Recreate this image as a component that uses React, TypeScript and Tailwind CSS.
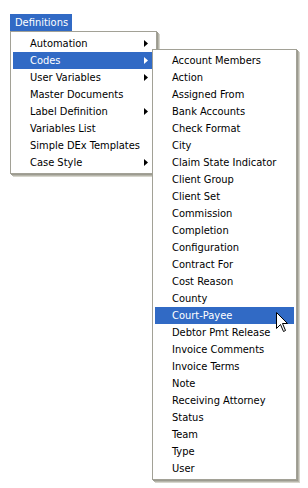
/** XP-style cascading menu: Definitions > Codes flyout. */

const MAIN_ITEMS: { label: string; sub?: boolean }[] = [
  { label: "Automation", sub: true },
  { label: "Codes", sub: true },
  { label: "User Variables", sub: true },
  { label: "Master Documents" },
  { label: "Label Definition", sub: true },
  { label: "Variables List" },
  { label: "Simple DEx Templates" },
  { label: "Case Style", sub: true },
]

const CODES = [
  "Account Members",
  "Action",
  "Assigned From",
  "Bank Accounts",
  "Check Format",
  "City",
  "Claim State Indicator",
  "Client Group",
  "Client Set",
  "Commission",
  "Completion",
  "Configuration",
  "Contract For",
  "Cost Reason",
  "County",
  "Court-Payee",
  "Debtor Pmt Release",
  "Invoice Comments",
  "Invoice Terms",
  "Note",
  "Receiving Attorney",
  "Status",
  "Team",
  "Type",
  "User",
]

function Arrow({ white }: { white?: boolean }) {
  return (
    <svg width="4" height="7" viewBox="0 0 4 7" className="block">
      <path d="M0 0 L4 3.5 L0 7 Z" fill={white ? "#ffffff" : "#000000"} />
    </svg>
  )
}

function Cursor() {
  return (
    <svg
      width="13"
      height="21"
      viewBox="0 0 13 21"
      className="absolute left-[276px] top-[312px]"
    >
      <path
        d="M0.5 0.5 L0.5 16.5 L4.5 12.5 L7.5 19.5 L9.5 18.5 L6.5 11.5 L11.5 11.5 Z"
        fill="#ffffff"
        stroke="#000000"
        strokeWidth="1"
      />
    </svg>
  )
}

const menuBox =
  "border border-[#a2a196] bg-white shadow-[1px_1px_0_#9c9b90,2px_2px_0_#b7b6ab,3px_3px_0_#d6d5cc]"

export default function App() {
  return (
    <div className="relative h-[488px] w-[308px] overflow-hidden bg-white font-['DejaVu_Sans_Condensed','Liberation_Sans',sans-serif] text-[11px] text-black">
      <div className="pl-[10px] pt-[14px]">
        <div className="h-[17px] w-[62px] bg-[#316ac5] pl-[5px] leading-[17px] text-white">
          Definitions
        </div>
        <div className={`w-[147px] px-[2px] pt-[3px] pb-[2px] ${menuBox}`}>
          {MAIN_ITEMS.map((it) => {
            const active = it.label === "Codes"
            return (
              <div
                key={it.label}
                className={`flex h-[17px] items-center justify-between pl-[17px] pr-[6px] ${active ? "bg-[#316ac5] text-white" : ""}`}
              >
                <span className="pt-px">{it.label}</span>
                {it.sub && <Arrow white={active} />}
              </div>
            )
          })}
        </div>
      </div>

      <div className={`absolute left-[152px] top-[49px] w-[145px] p-[2px] ${menuBox}`}>
        {CODES.map((c) => {
          const active = c === "Court-Payee"
          return (
            <div
              key={c}
              className={`flex h-[17px] items-center pl-[17px] ${active ? "bg-[#316ac5] text-white" : ""}`}
            >
              <span className="pt-px">{c}</span>
            </div>
          )
        })}
      </div>

      <Cursor />
    </div>
  )
}
